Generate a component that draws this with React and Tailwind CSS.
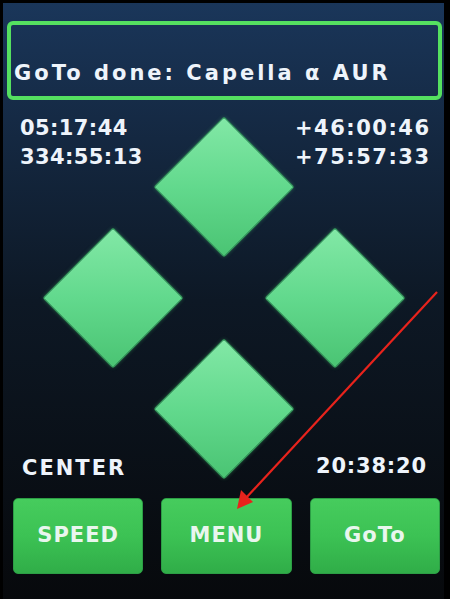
import React from "react"

const font = { fontFamily: '"DejaVu Sans", "Liberation Sans", sans-serif' }

function Diamond({ className = "" }) {
  return (
    <div className={`flex items-center justify-center ${className}`}>
      <div className="size-[100px] rotate-45 rounded-[3px] border border-[#36a25e] bg-gradient-to-br from-[#82e8a6] via-[#62d98d] to-[#4ac473] shadow-[0_0_4px_rgba(80,200,120,0.35)]" />
    </div>
  )
}

function Btn({ children }) {
  return (
    <button className="flex h-[76px] flex-1 items-center justify-center rounded-[5px] border border-[#2c9e45] bg-gradient-to-b from-[#46cc5d] via-[#3cc254] to-[#30ad48] text-[21px] font-bold tracking-[1px] text-[#e9f6ee]">
      {children}
    </button>
  )
}

export default function App() {
  return (
    <div className="relative h-[599px] w-[450px] overflow-hidden bg-black pl-[3px] pr-[6px] pt-[3px]" style={font}>
      <div className="flex h-[596px] flex-col bg-gradient-to-b from-[#1a365a] via-[#0d1825] via-50% to-[#07090c] text-[#eef4fb]">
        {/* status box */}
        <div className="ml-[4px] mr-[2px] mt-[18px] flex h-[79px] items-end rounded-[6px] border-[4px] border-[#55e060] pb-[7px] pl-[3px]">
          <span className="text-[21px] font-bold tracking-[3px]">GoTo done: Capella α AUR</span>
        </div>

        {/* d-pad */}
        <div className="mt-[31px] grid grid-cols-[54px_111px_111px_111px_1fr] grid-rows-[111px_111px_111px]">
          <div className="col-span-2 col-start-1 row-start-1 -mt-[17px] self-start pl-[17px] text-[21px] font-bold leading-[29px] tracking-[0.4px]">
            <div>05:17:44</div>
            <div>334:55:13</div>
          </div>
          <Diamond className="col-start-3 row-start-1" />
          <div className="col-span-2 col-start-4 row-start-1 -mt-[17px] self-start pl-[16px] text-[21px] font-bold leading-[29px] tracking-[1.5px]">
            <div>+46:00:46</div>
            <div>+75:57:33</div>
          </div>
          <Diamond className="col-start-2 row-start-2" />
          <Diamond className="col-start-4 row-start-2" />
          <div className="col-span-2 col-start-1 row-start-3 -mb-[20px] self-end pl-[19px] text-[21px] font-bold tracking-[2px]">CENTER</div>
          <Diamond className="col-start-3 row-start-3" />
          <div className="col-span-2 col-start-4 row-start-3 -mb-[18px] self-end pl-[37px] text-[21px] font-bold tracking-[0.8px]">20:38:20</div>
        </div>

        {/* buttons */}
        <div className="mt-[34px] flex gap-[18px] pl-[10px] pr-[4px]">
          <Btn>SPEED</Btn>
          <Btn>MENU</Btn>
          <Btn>GoTo</Btn>
        </div>
      </div>

      {/* annotation arrow */}
      <svg className="pointer-events-none absolute left-0 top-0" width="450" height="599">
        <line x1="437" y1="292" x2="245" y2="499" stroke="#e8231c" strokeWidth="2.2" />
        <polygon points="237,509 241,490 253,502" fill="#e8231c" />
      </svg>
    </div>
  )
}
